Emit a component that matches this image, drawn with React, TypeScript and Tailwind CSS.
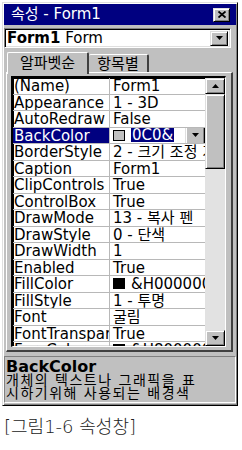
import React from 'react';

const raised =
  'border border-t-[#dfdfdf] border-l-[#dfdfdf] border-r-black border-b-black shadow-[inset_1px_1px_0_#fff,inset_-1px_-1px_0_#808080]';
const sunken =
  'border border-t-[#808080] border-l-[#808080] border-r-white border-b-white shadow-[inset_1px_1px_0_#000,inset_-1px_-1px_0_#dfdfdf]';

type Row = { name: string; value: React.ReactNode; selected?: boolean };

function Swatch({ color }: { color: string }) {
  return <span className={`inline-block shrink-0 w-[12px] h-[11px] border border-black mr-[6px] ${color}`} />;
}

function DownArrow() {
  return (
    <svg width="7" height="4" viewBox="0 0 7 4">
      <path d="M0 0h7L3.5 4z" fill="#000" />
    </svg>
  );
}

const rows: Row[] = [
  { name: '(Name)', value: 'Form1' },
  { name: 'Appearance', value: '1 - 3D' },
  { name: 'AutoRedraw', value: 'False' },
  {
    name: 'BackColor',
    selected: true,
    value: (
      <span className="flex items-center h-full">
        <Swatch color="bg-[#c0c0c0]" />
        <span className="bg-[#000080] text-white leading-[14px] px-[1px]">0C0&amp;</span>
      </span>
    ),
  },
  { name: 'BorderStyle', value: '2 - 크기 조정 가능' },
  { name: 'Caption', value: 'Form1' },
  { name: 'ClipControls', value: 'True' },
  { name: 'ControlBox', value: 'True' },
  { name: 'DrawMode', value: '13 - 복사 펜' },
  { name: 'DrawStyle', value: '0 - 단색' },
  { name: 'DrawWidth', value: '1' },
  { name: 'Enabled', value: 'True' },
  {
    name: 'FillColor',
    value: (
      <span className="flex items-center h-full">
        <Swatch color="bg-black" />
        <span>&amp;H00000000&amp;</span>
      </span>
    ),
  },
  { name: 'FillStyle', value: '1 - 투명' },
  { name: 'Font', value: '굴림' },
  { name: 'FontTransparent', value: 'True' },
  {
    name: 'ForeColor',
    value: (
      <span className="flex items-center h-full">
        <Swatch color="bg-black" />
        <span>&amp;H80000012&amp;</span>
      </span>
    ),
  },
];

export default function App() {
  return (
    <div className="w-[242px] h-[450px] bg-white overflow-hidden font-['DejaVu_Sans','Noto_Sans_CJK_KR',sans-serif] text-black">
      {/* window */}
      <div className={`ml-[2px] mt-[2px] w-[236px] h-[404px] bg-[#c0c0c0] p-[1px] flex flex-col ${raised}`}>
        {/* title bar */}
        <div className="h-[21px] bg-[#000080] flex items-center pl-[7px] pr-[6px]">
          <span className="text-white text-[15px] leading-[17px] whitespace-nowrap">속성 - Form1</span>
          <div className={`ml-auto w-[17px] h-[14px] bg-[#c0c0c0] flex items-center justify-center ${raised}`}>
            <svg width="8" height="7" viewBox="0 0 8 7">
              <path d="M0.5 0.5l7 6M7.5 0.5l-7 6" stroke="#000" strokeWidth="1.8" />
            </svg>
          </div>
        </div>

        {/* object combo */}
        <div className={`mt-[3px] mr-[5px] h-[20px] bg-white flex items-center pl-[2px] pr-[2px] ${sunken}`}>
          <span className="text-[15px] leading-[16px] whitespace-nowrap">
            <b>Form1</b> Form
          </span>
          <div className={`ml-auto w-[18px] h-[15px] bg-[#c0c0c0] flex items-center justify-center ${raised}`}>
            <DownArrow />
          </div>
        </div>

        {/* tabs */}
        <div className="mt-[2px] ml-[3px] h-[22px] flex items-end">
          <div className="relative z-10 h-[22px] w-[82px] bg-[#c0c0c0] border-l border-t border-white border-r-2 border-r-[#404040] rounded-t-[2px] flex items-center justify-center text-[15px] leading-[16px] -mb-[2px] pb-[2px]">
            알파벳순
          </div>
          <div className="h-[18px] w-[60px] bg-[#c0c0c0] border-t border-white border-r-2 border-r-[#404040] rounded-t-[2px] flex items-center justify-center text-[15px] leading-[16px]">
            항목별
          </div>
        </div>

        {/* tab panel */}
        <div className="ml-[2px] mr-[3px] h-[280px] border-l border-t border-white border-r-2 border-b-2 border-r-[#404040] border-b-[#404040] pt-[3px] pl-[4px] pr-[5px] pb-[3px] flex flex-col">
          <div className={`flex-1 flex min-h-0 bg-white ${sunken} border-l-2 border-t-2 border-l-black border-t-black`}>
            <div className="flex-1 overflow-hidden">
              {rows.map((r) => (
                <div key={r.name} className="flex h-[16.5px] border-b border-[#b8b8b8] text-[15px] leading-[16px]">
                  <div
                    className={`w-[97px] shrink-0 border-r border-[#b8b8b8] pl-[1px] overflow-hidden whitespace-nowrap ${
                      r.selected ? 'bg-[#000080] text-white' : ''
                    }`}
                  >
                    {r.name}
                  </div>
                  <div className="flex-1 min-w-0 pl-[3px] overflow-hidden whitespace-nowrap relative">
                    {r.value}
                    {r.selected && (
                      <div className={`absolute right-[0px] top-[-2px] w-[20px] h-[19px] bg-[#c0c0c0] flex items-center justify-center ${raised}`}>
                        <DownArrow />
                      </div>
                    )}
                  </div>
                </div>
              ))}
            </div>

            {/* scrollbar */}
            <div className="w-[20px] shrink-0 flex flex-col bg-[#e2e2e2]">
              <div className={`h-[16px] bg-[#c0c0c0] flex items-center justify-center ${raised}`}>
                <svg width="7" height="4" viewBox="0 0 7 4">
                  <path d="M0 4h7L3.5 0z" fill="#000" />
                </svg>
              </div>
              <div className={`h-[75px] bg-[#c0c0c0] ${raised}`} />
              <div className="flex-1" />
              <div className={`h-[16px] bg-[#c0c0c0] flex items-center justify-center ${raised}`}>
                <DownArrow />
              </div>
            </div>
          </div>
        </div>

        {/* description */}
        <div className={`mt-[4px] mb-[1px] flex-1 bg-[#c0c0c0] pl-[1px] pt-[3px] ${sunken} shadow-none border-t-[#404040]`}>
          <div className="font-bold text-[16px] leading-[13px]">BackColor</div>
          <div className="text-[14px] leading-[13px] tracking-[1.5px] whitespace-nowrap mt-[1px]">
            개체의 텍스트나 그래픽을 표
          </div>
          <div className="text-[14px] leading-[13px] tracking-[1.5px] whitespace-nowrap">
            시하기위해 사용되는 배경색
          </div>
        </div>
      </div>

      {/* caption */}
      <div className="mt-[11px] ml-[4px] text-[18px] leading-[20px] font-light text-[#222] whitespace-nowrap">
        [그림1-6 속성창]
      </div>
    </div>
  );
}
